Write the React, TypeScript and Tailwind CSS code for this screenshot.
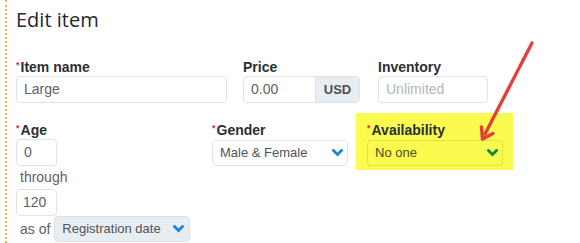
import React from "react";

const Chevron = ({ color }: { color: string }) => (
  <svg width="11" height="8" viewBox="0 0 11 8" className="shrink-0">
    <path d="M1.5 1.5 L5.5 5.5 L9.5 1.5" fill="none" stroke={color} strokeWidth="2.8" strokeLinecap="square" />
  </svg>
);

const Label = ({ text, req, mb = "mb-[1px]" }: { text: string; req?: boolean; mb?: string }) => (
  <div className={`h-[16px] leading-[16px] ${mb} flex items-start text-[14px] font-bold text-[#2b2e33] whitespace-nowrap`}>
    {req && <span className="text-[#d7332c] text-[9px] leading-[9px] mt-[2px] mr-[1px]">*</span>}
    <span>{text}</span>
  </div>
);

export default function App() {
  return (
    <div
      className="relative w-[580px] h-[243px] overflow-hidden bg-white flex"
      style={{ fontFamily: '"Liberation Sans", Arial, sans-serif' }}
    >
      <div className="w-[5px] shrink-0" />
      <div className="h-full border-l-2 border-dotted border-[#f7b35a] shrink-0" />
      <div className="flex flex-col pl-[9px] pt-[6px]">
        <div
          className="h-[28px] leading-[28px] text-[20px] font-medium text-[#25282d]"
          style={{ fontFamily: '"Open Sans", sans-serif' }}
        >
          Edit item
        </div>

        <div className="flex mt-[25px]">
          <div className="w-[211px] flex flex-col">
            <Label text="Item name" req />
            <div className="h-[27px] border border-[#dfe2e6] rounded-[4px] pl-[7px] flex items-center text-[14px] text-[#5e6166]">
              Large
            </div>
          </div>
          <div className="w-[117px] ml-[16px] flex flex-col">
            <Label text="Price" />
            <div className="h-[27px] border border-[#dfe2e6] rounded-[4px] flex text-[14px]">
              <div className="flex-1 pl-[7px] flex items-center text-[#5e6166]">0.00</div>
              <div className="w-[44px] bg-[#e8edf1] border-l border-[#dfe2e6] rounded-r-[4px] flex items-center justify-center text-[13px] font-bold text-[#4b4f55]">
                USD
              </div>
            </div>
          </div>
          <div className="w-[110px] ml-[18px] flex flex-col">
            <Label text="Inventory" />
            <div className="h-[27px] border border-[#dfe2e6] rounded-[4px] pl-[7px] flex items-center text-[14px] text-[#b3b6ba]">
              Unlimited
            </div>
          </div>
        </div>

        <div className="flex items-start mt-[10px]">
          <div className="w-[196px] pt-[9px] flex flex-col">
            <Label text="Age" req />
            <div className="w-[41px] h-[27px] border border-[#dfe2e6] rounded-[4px] pl-[7px] flex items-center text-[14px] text-[#5e6166]">
              0
            </div>
            <div className="h-[23px] leading-[23px] pl-[4px] text-[14px] text-[#5e6166]">through</div>
            <div className="w-[41px] h-[27px] border border-[#dfe2e6] rounded-[4px] pl-[6px] flex items-center text-[14px] text-[#5e6166]">
              120
            </div>
            <div className="flex items-center h-[26px]">
              <span className="pl-[4px] text-[14px] text-[#5e6166]">as of</span>
              <div className="ml-[4px] w-[136px] h-[26px] bg-[#e8edf1] border border-[#dde2e6] rounded-[4px] pl-[7px] pr-[5px] flex items-center justify-between text-[13px] text-[#4f5358]">
                <span>Registration date</span>
                <Chevron color="#1b87d0" />
              </div>
            </div>
          </div>

          <div className="w-[136px] pt-[9px] flex flex-col">
            <Label text="Gender" req mb="mb-[2px]" />
            <div className="h-[26px] border border-[#dfe2e6] rounded-[4px] pl-[7px] pr-[4px] flex items-center justify-between text-[13px] text-[#4f5358]">
              <span>Male &amp; Female</span>
              <Chevron color="#1b87d0" />
            </div>
          </div>

          <div className="ml-[8px] w-[157px] h-[57px] bg-[#fbfa4f] pt-[9px] pl-[11px] pr-[10px] flex flex-col">
            <Label text="Availability" req mb="mb-[2px]" />
            <div className="h-[26px] border border-[#e2df45] rounded-[4px] pl-[7px] pr-[4px] flex items-center justify-between text-[13px] text-[#4d4c1e]">
              <span>No one</span>
              <Chevron color="#0f8a45" />
            </div>
          </div>
        </div>
      </div>

      <svg className="absolute inset-0 pointer-events-none" width="580" height="243" viewBox="0 0 580 243">
        <line x1="532" y1="43" x2="485" y2="134" stroke="#e2413b" strokeWidth="3.4" strokeLinecap="round" />
        <polyline
          points="481.5,127 482.5,139 493,133.5"
          fill="none"
          stroke="#e2413b"
          strokeWidth="3.4"
          strokeLinecap="round"
          strokeLinejoin="round"
        />
      </svg>
    </div>
  );
}
